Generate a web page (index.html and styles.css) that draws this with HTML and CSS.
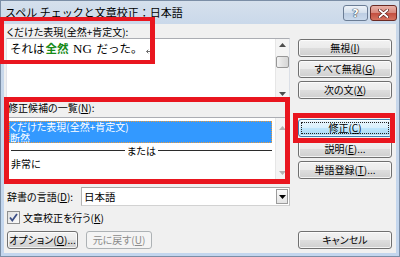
FILE: index.html
```html
<!DOCTYPE html>
<html lang="ja">
<head>
    <meta charset="UTF-8">
    <title>スペル チェックと文章校正：日本語</title>
    <link rel="stylesheet" href="styles.css">
</head>
<body>

<div class="window">
    <div class="titlebar">
        <span class="title">スペル チェックと文章校正：日本語</span>
        <div class="caption">
            <span class="cap-btn help">?</span>
            <span class="cap-btn close">
                <svg width="11" height="9" viewBox="0 0 11 9"><path d="M1.5 1 L9.5 8 M9.5 1 L1.5 8" stroke="#5a1d18" stroke-width="3.2" stroke-linecap="round"/><path d="M1.5 1 L9.5 8 M9.5 1 L1.5 8" stroke="#fff" stroke-width="1.8" stroke-linecap="round"/></svg>
            </span>
        </div>
    </div>

    <div class="client">
        <!-- left side -->
        <div class="col-left">
            <div class="label first">くだけた表現(全然+肯定文):</div>
            <div class="editbox">
                <div class="edit-text">それは<span class="hit">全然</span> <span class="latin">NG</span> だった。<svg class="para" width="7" height="7" viewBox="0 0 7 7"><path d="M6 0.5 V4.5 H1.5 M3.3 2.7 L1.5 4.5 L3.3 6.3" fill="none" stroke="#6f6f6f" stroke-width="1"/></svg></div>
                <div class="vscroll">
                    <div class="sb-arrow up"><svg width="7" height="4" viewBox="0 0 7 4"><path d="M0 4 L3.5 0 L7 4 Z" fill="#4d4d4d"/></svg></div>
                    <div class="sb-thumb"></div>
                    <div class="sb-fill"></div>
                    <div class="sb-arrow down"><svg width="7" height="4" viewBox="0 0 7 4"><path d="M0 0 L3.5 4 L7 0 Z" fill="#4d4d4d"/></svg></div>
                </div>
            </div>

            <div class="label second">修正候補の一覧(<u>N</u>):</div>
            <div class="listbox">
                <div class="list-items">
                    <div class="selected">
                        <div class="item">くだけた表現(全然+肯定文)</div>
                        <div class="item">断然</div>
                    </div>
                    <div class="divider"><span>または</span></div>
                    <div class="item">非常に</div>
                </div>
                <div class="vscroll off">
                    <div class="sb-arrow up"><svg width="7" height="4" viewBox="0 0 7 4"><path d="M0 4 L3.5 0 L7 4 Z" fill="#b4b4b4"/></svg></div>
                    <div class="sb-fill"></div>
                    <div class="sb-arrow down"><svg width="7" height="4" viewBox="0 0 7 4"><path d="M0 0 L3.5 4 L7 0 Z" fill="#b4b4b4"/></svg></div>
                </div>
            </div>

            <div class="dict-row">
                <span class="dict-label">辞書の言語(<u>D</u>):</span>
                <div class="combo">
                    <span class="combo-text">日本語</span>
                    <span class="combo-btn"><svg width="7" height="4" viewBox="0 0 7 4"><path d="M0 0 L3.5 4 L7 0 Z" fill="#000"/></svg></span>
                </div>
            </div>

            <div class="check-row">
                <span class="checkbox">
                    <svg width="13" height="13" viewBox="0 0 13 13"><path d="M3 6.5 L5.3 9.5 L10 3" fill="none" stroke="#3c4f86" stroke-width="1.8"/></svg>
                </span>
                <span>文章校正を行う(<u>K</u>)</span>
            </div>

            <div class="btn-row">
                <button class="btn opt">オプション(<u>O</u>)...</button>
                <button class="btn undo" disabled>元に戻す(<u>U</u>)</button>
            </div>
        </div>

        <!-- right side buttons -->
        <div class="col-right">
            <div class="btn-group">
                <button class="btn">無視(<u>I</u>)</button>
                <button class="btn">すべて無視(<u>G</u>)</button>
                <button class="btn">次の文(<u>X</u>)</button>
            </div>
            <div class="btn-group second">
                <button class="btn default">修正(<u>C</u>)</button>
                <button class="btn">説明(<u>E</u>)...</button>
                <button class="btn">単語登録(<u>T</u>)...</button>
            </div>
            <button class="btn cancel">キャンセル</button>
        </div>
    </div>

    <!-- red annotation boxes -->
    <div class="mark mark-1"></div>
    <div class="mark mark-2"></div>
    <div class="mark mark-3"></div>
</div>

</body>
</html>
```

FILE: styles.css
```css
body {
    margin: 0;
    width: 400px;
    height: 257px;
    overflow: hidden;
    font-family: "Noto Sans CJK JP", "Noto Sans", sans-serif;
    font-size: 10px;
    font-feature-settings: "palt";
    color: #000;
    background: #fff;
}

/* Window frame */
.window {
    position: relative;
    width: 400px;
    height: 257px;
    box-sizing: border-box;
    border: 1px solid #7b8ea6;
    background: linear-gradient(#d5e0ec, #c9d8ea 24px, #c3d6ee);
    display: flex;
    flex-direction: column;
}

.titlebar {
    height: 23px;
    display: flex;
    align-items: flex-start;
    justify-content: space-between;
    flex-shrink: 0;
}

.title {
    padding-left: 4px;
    line-height: 23px;
    font-size: 11px;
    font-feature-settings: normal;
    color: #000;
}

.caption {
    display: flex;
    gap: 2px;
    margin-top: 4px;
    margin-right: 2px;
}

.cap-btn {
    height: 16px;
    box-sizing: border-box;
    border-radius: 3px;
    display: flex;
    align-items: center;
    justify-content: center;
}

.help {
    width: 25px;
    border: 1px solid #6b7d95;
    background: linear-gradient(#eef3f9, #d3dfec 50%, #bccde2 50%, #c9d9ec);
    color: #fff;
    font-family: "DejaVu Sans", sans-serif;
    font-weight: bold;
    font-size: 11px;
    text-shadow: 0 0 1px #2f3d50, 0 0 1px #2f3d50, 0 0 1px #2f3d50;
}

.close {
    width: 27px;
    border: 1px solid #6a2a24;
    background: linear-gradient(#e9b3aa, #d7877b 50%, #c24d3f 50%, #d5735f);
}

/* Dialog client area */
.client {
    flex: 1;
    margin: 0 3px 3px 3px;
    background: #f0f0f0;
    display: flex;
    gap: 8px;
    padding: 0 4px 4px 2px;
}

.col-left {
    width: 284px;
    display: flex;
    flex-direction: column;
}

.col-right {
    width: 94px;
    display: flex;
    flex-direction: column;
    padding-top: 15px;
}

.label {
    line-height: 12px;
    height: 12px;
    white-space: nowrap;
}

.label.first { padding-top: 2px; padding-left: 1px; }
.label.second { margin-top: 4px; margin-bottom: 3px; padding-left: 2px; }

/* Edit box */
.editbox {
    height: 60px;
    box-sizing: border-box;
    border: 1px solid #abadb3;
    border-color: #abadb3 #dbdfe6 #e3e9ef #e2e3ea;
    background: #fff;
    display: flex;
}

.edit-text {
    flex: 1;
    padding: 2px 3px;
    font-size: 11.5px;
    font-feature-settings: normal;
    line-height: 14px;
    white-space: nowrap;
}

.hit {
    color: #178a17;
    font-weight: bold;
    padding-left: 1px;
}

.latin {
    font-family: "Liberation Serif", serif;
    font-size: 13px;
    padding: 0 2px;
}

.para {
    margin-left: 3px;
    vertical-align: -1px;
}

/* Scrollbars */
.vscroll {
    width: 13px;
    background: #f4f4f4;
    border-left: 1px solid #e6e6e6;
    display: flex;
    flex-direction: column;
}

.sb-arrow {
    display: flex;
    align-items: center;
    justify-content: center;
}

.editbox .sb-arrow.up { height: 12px; }
.editbox .sb-arrow.down { height: 6px; }

.sb-thumb {
    margin: 5px 0 0 0;
    height: 12px;
    box-sizing: border-box;
    border: 1px solid #979797;
    border-radius: 2px;
    background: linear-gradient(to right, #f3f3f3, #e2e2e2 50%, #d6d6d6);
}

.sb-fill { flex: 1; }

.listbox .sb-arrow.up { height: 20px; }
.listbox .sb-arrow.down { height: 16px; }

/* Suggestion list */
.listbox {
    height: 65px;
    box-sizing: border-box;
    border: 1px solid #abadb3;
    border-color: #abadb3 #dbdfe6 #e3e9ef #e2e3ea;
    background: #fff;
    display: flex;
}

.list-items {
    flex: 1;
    padding: 3px 3px 0 2px;
}

.item {
    line-height: 11px;
    height: 11px;
    padding-left: 1px;
    white-space: nowrap;
}

.selected {
    background: #3399ff;
    color: #fff;
    outline: 1px dotted #e89a3c;
    outline-offset: -1px;
}

.divider {
    display: flex;
    align-items: center;
    height: 13px;
    margin: 1px 0 1px 2px;
}

.divider::before,
.divider::after {
    content: "";
    flex: 1;
    height: 1px;
    background: #2b2b2b;
}

.divider span {
    padding: 0 2px;
    line-height: 13px;
}

.list-items > .item:last-child { padding-left: 2px; }

/* Dictionary language */
.dict-row {
    margin-top: 5px;
    height: 19px;
    display: flex;
    align-items: center;
}

.dict-label {
    width: 74px;
    padding-left: 1px;
    white-space: nowrap;
}

.combo {
    flex: 1;
    height: 19px;
    box-sizing: border-box;
    border: 1px solid #a6a6a6;
    border-color: #a6a6a6 #c0c0c0 #d2d2d2 #b4b4b4;
    background: #fff;
    display: flex;
    align-items: center;
}

.combo-text {
    flex: 1;
    padding-left: 2px;
    font-size: 10.5px;
}

.combo-btn {
    width: 12px;
    height: 15px;
    margin-right: 1px;
    box-sizing: border-box;
    border: 1px solid #9c9c9c;
    background: linear-gradient(#fafafa, #e4e4e4);
    display: flex;
    align-items: center;
    justify-content: center;
}

/* Checkbox */
.check-row {
    margin-top: 4px;
    height: 15px;
    display: flex;
    align-items: center;
    gap: 3px;
    padding-left: 1px;
}

.checkbox {
    width: 13px;
    height: 13px;
    box-sizing: border-box;
    border: 1px solid #8e8f8f;
    background: linear-gradient(135deg, #e0e0e0, #fbfbfb);
    display: flex;
    align-items: center;
    justify-content: center;
}

.checkbox svg { margin: -1px; }

/* Buttons */
.btn-row {
    margin-top: auto;
    display: flex;
    gap: 8px;
    padding-left: 1px;
}

.btn-group {
    display: flex;
    flex-direction: column;
    gap: 3px;
}

.btn-group.second { margin-top: 20px; }

.btn {
    position: relative;
    height: 18px;
    box-sizing: border-box;
    padding: 0;
    font-family: "Noto Sans CJK JP", "Noto Sans", sans-serif;
    font-size: 10px;
    font-feature-settings: "palt";
    line-height: 16px;
    color: #000;
    border: 1px solid #707070;
    border-radius: 3px;
    background: linear-gradient(#f2f2f2, #ebebeb 48%, #dddddd 52%, #cfcfcf);
    box-shadow: inset 0 0 0 1px rgba(255, 255, 255, 0.75);
    white-space: nowrap;
}

.btn.default {
    border-color: #3c7fb1;
    background: linear-gradient(#eaf6fd, #d9f0fc 48%, #bee6fd 52%, #a7d9f5);
}

.btn.default::after {
    content: "";
    position: absolute;
    inset: 2px;
    border: 1px dotted #222;
}

.btn.opt { width: 71px; }

.btn.undo {
    width: 66px;
    color: #8b8b8b;
    border-color: #adb2b5;
    background: #f4f4f4;
    box-shadow: none;
}

.btn.cancel { margin-top: auto; }

/* Annotation boxes */
.mark {
    position: absolute;
    box-sizing: border-box;
    border: 5px solid #e9161f;
}

.mark-1 {
    left: -1px;
    top: 16px;
    width: 155px;
    height: 47px;
    border-width: 4px 5px 4px 4px;
}

.mark-2 {
    left: 3px;
    top: 96px;
    width: 286px;
    height: 87px;
}

.mark-3 {
    left: 292px;
    top: 112px;
    width: 102px;
    height: 30px;
}
```
